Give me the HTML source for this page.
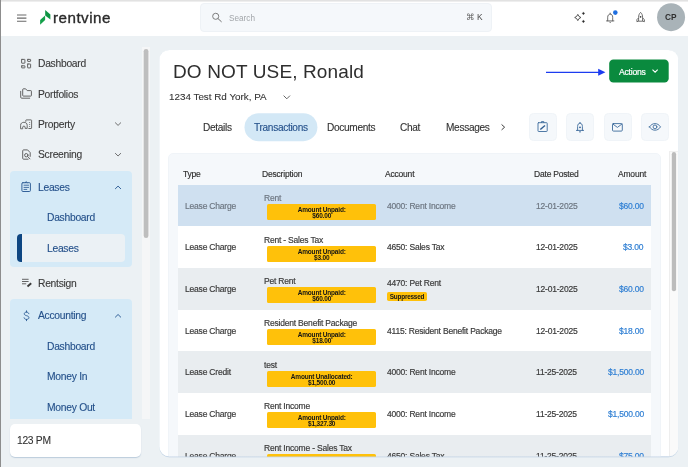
<!DOCTYPE html>
<html lang="en">
<head>
<meta charset="utf-8">
<title>Rentvine - Lease Transactions</title>
<style>
*{box-sizing:border-box;margin:0;padding:0}
html,body{width:688px;height:467px;overflow:hidden}
body{position:relative;background:#ecf1f4;font-family:"Liberation Sans",Arial,sans-serif;color:#3a3a3a;-webkit-font-smoothing:antialiased}
.abs{position:absolute}
.t{position:absolute;white-space:nowrap;line-height:1;transform:translateY(-50%);will-change:transform}
svg{position:absolute;overflow:visible}

/* window edges */
#edgeL{left:0;top:0;width:1px;height:467px;background:#8d8d8d;z-index:50}
#edgeT{left:0;top:0;width:688px;height:2px;background:linear-gradient(#dcdcdc,#f4f4f4);z-index:49}

/* header */
header{position:absolute;left:0;top:0;width:688px;height:36px;background:#fff}
#search{left:200px;top:3px;width:292px;height:29px;background:#f5f8fb;border:1px solid #eef2f6;border-radius:4px}
#logo-text{left:53.4px;top:18.1px;font-size:15.2px;color:#2a2a2a;letter-spacing:0.48px;-webkit-text-stroke:0.35px #2a2a2a}

/* sidebar */
nav{position:absolute;left:0;top:36px;width:150px;height:431px}
.grp{position:absolute;left:10.3px;width:121.7px;background:#d5eaf7;border-radius:4px}
.nav-t{font-size:10.3px;letter-spacing:-0.27px;left:38.2px;color:#3a3a3a;-webkit-text-stroke:0.12px}
.nav-s{font-size:10.3px;letter-spacing:-0.27px;left:46.8px;color:#24508a;-webkit-text-stroke:0.12px}
.blue{color:#24508a}
#sb-track{left:142px;top:11px;width:7.6px;height:372.4px;background:#f5f6f7}
#sb-thumb{left:143.7px;top:13px;width:4.8px;height:189px;background:#bebebe;border-radius:2.4px}
#pm{left:10px;top:388.3px;width:131px;height:32.7px;background:#fff;border-radius:5px;box-shadow:0 1px 1px rgba(150,175,200,.55)}

/* main card */
main{position:absolute;left:160px;top:50px;width:518.3px;height:406.5px;border-radius:10px;overflow:hidden}
h1{position:absolute;white-space:nowrap;font-weight:400;font-size:19px;letter-spacing:0.13px;line-height:1;left:12.8px;top:21.3px;transform:translateY(-50%);will-change:transform;color:#2e2e2e}
#addr{left:9px;top:46.9px;font-size:9.85px;color:#333;-webkit-text-stroke:0.1px}
.tab{font-size:10.1px;letter-spacing:-0.31px;top:77.8px;color:#333;-webkit-text-stroke:0.12px}
.ib{position:absolute;top:63px;width:28px;height:28px;border-radius:4.5px;background:#f5f8fb;border:1px solid #f0f4f8}
#tcard{left:8.4px;top:103px;width:492.3px;height:330px;background:#f5f8fb;border:1px solid #f0f4f8;border-radius:5px}
#vtrack{left:509.3px;top:100.6px;width:9px;height:306px;background:#fafafa;border-left:1px solid #eeeeee;border-top:1px solid #f1f1f1}
#vthumb{left:511.8px;top:102.2px;width:4.2px;height:139px;background:#bcbcbc;border-radius:2.1px}
.th{font-size:8.5px;letter-spacing:-0.2px;top:124.3px;color:#2e2e2e;-webkit-text-stroke:0.15px}
.row{position:absolute;left:17.9px;width:472.7px;height:41.7px;font-size:8.5px;letter-spacing:-0.2px;color:#3a3a3a}
.row.g{background:#e9edf0}
.row.w{background:#fff}
.row.h{background:#cfe0f0;color:#6d7681}
.row .t{top:21px;-webkit-text-stroke:0.18px}
.row .c1{left:7.4px}
.row .c2{left:85.8px;top:13.3px}
.row .c3{left:209px}
.row .c3.up{top:15.1px}
.row .c4{left:358.6px}
.row .c5{right:7px;color:#2f7fd3}
.badge{position:absolute;left:88.8px;top:19.3px;width:109.4px;height:15.7px;border-radius:1.6px;background:#ffc10a;color:#151515;font-weight:700;font-size:6.5px;letter-spacing:-0.19px;line-height:6px;text-align:center;padding-top:2.85px;will-change:transform}
.sup{position:absolute;left:209.2px;top:23.6px;width:40px;height:9.2px;border-radius:1.8px;background:#ffc10a;color:#151515;font-weight:700;font-size:6.4px;letter-spacing:-0.2px;line-height:9.2px;text-align:center;will-change:transform}
</style>
</head>
<body>
<div id="edgeT" class="abs"></div>
<div id="edgeL" class="abs"></div>

<header>
  <svg style="left:16.8px;top:13.5px" width="10" height="8" viewBox="0 0 10 8"><path d="M0 0.9h9.4M0 4.1h9.4M0 7.2h9.4" stroke="#6a6a6a" stroke-width="1.05" fill="none"/></svg>
  <svg style="left:40px;top:10px" width="11" height="15" viewBox="0 0 11 15"><path d="M0.1 10.1L5.1 5.6V10.1L0.1 14.7Z" fill="#14a04a"/><path d="M5.2 0.1L10.4 4.5V9.4L5.2 5.4Z" fill="#0e9443"/></svg>
  <span id="logo-text" class="t">rentvine</span>
  <div id="search" class="abs"></div>
  <svg style="left:212px;top:12px" width="11" height="11" viewBox="0 0 11 11"><circle cx="3.7" cy="4.3" r="3.05" fill="none" stroke="#707070" stroke-width="0.9"/><path d="M5.9 6.5L9.6 9.9" stroke="#707070" stroke-width="1" fill="none"/></svg>
  <span class="t" style="left:229px;top:18.7px;font-size:8.2px;color:#a2a6aa">Search</span>
  <span class="t" style="left:465.8px;top:17.4px;font-size:8.3px;color:#5a5a5a;font-family:'DejaVu Sans','Liberation Sans',sans-serif">⌘</span>
  <span class="t" style="left:477px;top:17.2px;font-size:8.4px;color:#4a4a4a">K</span>
  <!-- sparkle -->
  <svg style="left:574px;top:11px" width="12" height="13" viewBox="0 0 12 13"><path d="M3.8 3.4Q4.5 5.8 6.9 6.5Q4.5 7.2 3.8 9.6Q3.1 7.2 0.7 6.5Q3.1 5.8 3.8 3.4Z" fill="none" stroke="#2d2d2d" stroke-width="0.8" stroke-linejoin="round"/><path d="M9.4 0.9L9.85 1.95L10.9 2.4L9.85 2.85L9.4 3.9L8.95 2.85L7.9 2.4L8.95 1.95Z M9.4 8.9L9.85 9.95L10.9 10.4L9.85 10.85L9.4 11.9L8.95 10.85L7.9 10.4L8.95 9.95Z" fill="#222" stroke="#222" stroke-width="0.3"/></svg>
  <!-- bell -->
  <svg style="left:606px;top:12px" width="12" height="12" viewBox="0 0 12 12"><path d="M0.5 8.9H7.9M1.7 8.9V5.2C1.7 3.3 2.8 2.1 4.2 2.1C5.6 2.1 6.7 3.3 6.7 5.2V8.9M4.2 2.1V1.1M3.5 10.1C3.8 10.7 4.6 10.7 4.9 10.1" fill="none" stroke="#555" stroke-width="0.85" stroke-linecap="round"/><circle cx="9.3" cy="0.6" r="2.3" fill="#1f6fe0"/></svg>
  <!-- rocket -->
  <svg style="left:636px;top:12px" width="10" height="11" viewBox="0 0 10 11"><path d="M4.6 0.4C6 1.6 6.6 3.4 6.6 5.6V9.2H2.6V5.6C2.6 3.4 3.2 1.6 4.6 0.4ZM2.6 5.9L0.9 7.6V9.7L2.6 9.2M6.6 5.9L8.4 7.6V9.7L6.6 9.2" fill="none" stroke="#4a4a4a" stroke-width="0.8" stroke-linejoin="round"/><circle cx="4.6" cy="4.8" r="0.85" fill="#3a3a3a"/></svg>
  <svg style="left:656px;top:2px" width="31" height="31" viewBox="0 0 31 31"><circle cx="15.05" cy="15.2" r="14" fill="#a9b3b8"/></svg>
  <span class="t" style="left:664.9px;top:17.1px;font-size:8.3px;font-weight:700;color:#2f2f2f;letter-spacing:0.1px">CP</span>
</header>

<nav>
  <div id="sb-track" class="abs"></div>
  

  <span class="t nav-t" style="top:28.3px">Dashboard</span>
  <span class="t nav-t" style="top:58.5px">Portfolios</span>
  <span class="t nav-t" style="top:88.8px">Property</span>
  <span class="t nav-t" style="top:119.2px">Screening</span>

  <div class="grp" style="top:135px;height:95.5px"></div>
  <span class="t nav-t blue" style="top:152.3px">Leases</span>
  <span class="t nav-s" style="top:182.3px">Dashboard</span>
  <div class="abs" style="left:16.7px;top:198px;width:108.5px;height:28px;background:#ebf1f5;border-radius:4px;border-left:5px solid #0d4682"></div>
  <span class="t nav-s" style="top:212.6px">Leases</span>

  <span class="t nav-t" style="top:248.1px">Rentsign</span>

  <div class="grp" style="top:263px;height:120.4px;border-bottom-left-radius:0;border-bottom-right-radius:0"></div>
  <span class="t nav-t blue" style="top:280.3px">Accounting</span>
  <span class="t nav-s" style="top:311.0px">Dashboard</span>
  <span class="t nav-s" style="top:341.3px">Money In</span>
  <span class="t nav-s" style="top:371.6px">Money Out</span>

  <div id="pm" class="abs"></div>
  <span class="t" style="left:17.3px;top:405px;font-size:10.3px;letter-spacing:-0.3px;color:#333;-webkit-text-stroke:0.1px">123 PM</span>
</nav>

<svg style="left:158px;top:48px" width="524" height="412" viewBox="0 0 524 412"><rect x="1.3" y="2.3" width="519.1" height="406.8" rx="10" fill="#c9d9e8"/><rect x="1.3" y="1.9" width="519.1" height="406.7" rx="10" fill="#fff"/></svg>
<main>
  <h1>DO NOT USE, Ronald</h1>
  <span id="addr" class="t">1234 Test Rd York, PA</span>
  <svg style="left:122.8px;top:44.6px" width="8" height="5" viewBox="0 0 8 5"><path d="M0.6 0.6L3.8 3.8L7 0.6" fill="none" stroke="#555" stroke-width="0.9"/></svg>

  <!-- arrow -->
  <svg style="left:386px;top:18px" width="60" height="9" viewBox="0 0 60 9"><path d="M0 4.3H53" stroke="#1c3cf0" stroke-width="1.25"/><path d="M52.2 0.8L59.4 4.3L52.2 7.8Z" fill="#1c3cf0"/></svg>
  <svg style="left:449px;top:9px" width="61" height="25" viewBox="0 0 61 25"><rect x="0.2" y="0.6" width="59.5" height="23" rx="4.2" fill="#0a8a3e"/></svg>
  <span class="t" style="left:459px;top:21.7px;font-size:8.6px;letter-spacing:-0.22px;color:#fff;font-weight:400;-webkit-text-stroke:0.2px #fff">Actions</span>
  <svg style="left:491.8px;top:19.4px" width="7" height="5" viewBox="0 0 7 5"><path d="M0.5 0.6L3.1 3.2L5.7 0.6" fill="none" stroke="#fff" stroke-width="1.1"/></svg>

  <svg style="left:84px;top:63px" width="74" height="29" viewBox="0 0 74 29"><rect x="0.5" y="0.2" width="72.9" height="28" rx="14" fill="#d3e8f6"/></svg>
  <span class="t tab" style="left:43.4px">Details</span>
  <span class="t tab" style="left:94.4px;color:#24508a">Transactions</span>
  <span class="t tab" style="left:167.3px">Documents</span>
  <span class="t tab" style="left:240px">Chat</span>
  <span class="t tab" style="left:286.2px">Messages</span>
  <svg style="left:340.6px;top:74.2px" width="5" height="7" viewBox="0 0 5 7"><path d="M0.6 0.5L3.6 3.2L0.6 5.9" fill="none" stroke="#333" stroke-width="0.95"/></svg>

  <div class="ib" style="left:368.5px"></div>
  <div class="ib" style="left:406.1px"></div>
  <div class="ib" style="left:443.5px"></div>
  <div class="ib" style="left:481px"></div>

  <div id="tcard" class="abs"></div>
  <span class="t th" style="left:23.3px">Type</span>
  <span class="t th" style="left:101.5px">Description</span>
  <span class="t th" style="left:225px">Account</span>
  <span class="t th" style="left:373.9px">Date Posted</span>
  <span class="t th" style="left:458.2px">Amount</span>

  <div class="row h" style="top:134.6px"><span class="t c1">Lease Charge</span><span class="t c2">Rent</span><div class="badge">Amount Unpaid:<br>$60.00</div><span class="t c3">4000: Rent Income</span><span class="t c4">12-01-2025</span><span class="t c5">$60.00</span></div>
  <div class="row w" style="top:176.3px"><span class="t c1">Lease Charge</span><span class="t c2">Rent - Sales Tax</span><div class="badge">Amount Unpaid:<br>$3.00</div><span class="t c3">4650: Sales Tax</span><span class="t c4">12-01-2025</span><span class="t c5">$3.00</span></div>
  <div class="row g" style="top:218px"><span class="t c1">Lease Charge</span><span class="t c2">Pet Rent</span><div class="badge">Amount Unpaid:<br>$60.00</div><span class="t c3 up">4470: Pet Rent</span><div class="sup">Suppressed</div><span class="t c4">12-01-2025</span><span class="t c5">$60.00</span></div>
  <div class="row w" style="top:259.7px"><span class="t c1">Lease Charge</span><span class="t c2">Resident Benefit Package</span><div class="badge">Amount Unpaid:<br>$18.00</div><span class="t c3">4115: Resident Benefit Package</span><span class="t c4">12-01-2025</span><span class="t c5">$18.00</span></div>
  <div class="row g" style="top:301.4px"><span class="t c1">Lease Credit</span><span class="t c2">test</span><div class="badge">Amount Unallocated:<br>$1,500.00</div><span class="t c3">4000: Rent Income</span><span class="t c4">11-25-2025</span><span class="t c5">$1,500.00</span></div>
  <div class="row w" style="top:343.1px"><span class="t c1">Lease Charge</span><span class="t c2">Rent Income</span><div class="badge">Amount Unpaid:<br>$1,327.30</div><span class="t c3">4000: Rent Income</span><span class="t c4">11-25-2025</span><span class="t c5">$1,500.00</span></div>
  <div class="row g" style="top:384.8px"><span class="t c1">Lease Charge</span><span class="t c2">Rent Income - Sales Tax</span><div class="badge">Amount Unpaid:<br>$75.00</div><span class="t c3">4650: Sales Tax</span><span class="t c4">11-25-2025</span><span class="t c5">$75.00</span></div>

  <div id="vtrack" class="abs"></div>
  
</main>

<svg id="icons" style="left:0;top:0;z-index:20;pointer-events:none" width="688" height="467" viewBox="0 0 688 467" fill="none" stroke-linecap="round" stroke-linejoin="round">
  <defs><linearGradient id="cbg" gradientUnits="userSpaceOnUse" x1="0" y1="449" x2="0" y2="457"><stop offset="0" stop-color="#c3d4e6" stop-opacity="0"/><stop offset="0.7" stop-color="#c3d4e6" stop-opacity="0.5"/><stop offset="1" stop-color="#c3d4e6" stop-opacity="1"/></linearGradient><clipPath id="cbc"><rect x="150" y="449" width="540" height="12"/></clipPath></defs>
  <rect x="159.3" y="50" width="519.1" height="406.9" rx="10" fill="none" stroke="url(#cbg)" stroke-width="0.9" clip-path="url(#cbc)"/>
  <rect x="143.7" y="49" width="4.7" height="189" rx="2.35" fill="#bebebe"/>
  <rect x="671.8" y="152.1" width="4.3" height="139.2" rx="2.15" fill="#bcbcbc"/>
  <!-- sidebar: dashboard -->
  <g stroke="#5c5c5c" stroke-width="0.95">
    <rect x="21.6" y="59.4" width="3.3" height="3.8" rx="0.3"/>
    <rect x="27.6" y="59.4" width="3" height="2" rx="0.3"/>
    <rect x="21.6" y="65.8" width="3.3" height="2.1" rx="0.3"/>
    <rect x="27.6" y="64" width="3" height="3.9" rx="0.3"/>
  </g>
  <!-- portfolios -->
  <g stroke="#5c5c5c" stroke-width="0.95">
    <path d="M22.7 89.4Q22.7 88.8 23.3 88.8H25.6L27.2 90.6H30.8Q31.4 90.6 31.4 91.2V95.5Q31.4 96.1 30.8 96.1H23.3Q22.7 96.1 22.7 95.5Z"/>
    <path d="M20.7 91.3V97.2Q20.7 98.2 21.7 98.2H29.7"/>
  </g>
  <!-- property -->
  <g stroke="#5c5c5c" stroke-width="0.9">
    <path d="M20.6 128.4V125.3C20.6 123.3 22 122.3 23.9 122.3C25.8 122.3 27.2 123.3 27.2 125.3V128.4H25.1V127.1C25.1 125.8 22.7 125.8 22.7 127.1V128.4Z"/>
    <path d="M25.8 121.4V120.4Q25.8 119.9 26.3 119.9H31.1Q31.6 119.9 31.6 120.4V128Q31.6 128.5 31.1 128.5H28.8"/>
  </g>
  <g fill="#5c5c5c"><circle cx="29.7" cy="122.6" r="0.5"/><circle cx="29.7" cy="124.5" r="0.5"/><circle cx="29.7" cy="126.4" r="0.5"/></g>
  <!-- screening -->
  <g stroke="#5c5c5c" stroke-width="0.95">
    <path d="M30.2 156.4V152.6L27.6 149.9H23.6Q22.7 149.9 22.7 150.8V158.3Q22.7 159.2 23.6 159.2H28.1"/>
    <circle cx="26.3" cy="155.2" r="1.7"/>
    <path d="M27.6 156.5L30 158.9"/>
  </g>
  <!-- leases -->
  <g stroke="#2a5a94" stroke-width="0.95">
    <rect x="21.9" y="182.7" width="8.5" height="8.8" rx="1"/>
    <path d="M25.2 182.6L26.15 181.7L27.1 182.6" />
    <path d="M24 185.2H28.6M24 187.4H28.6M24 189.4H26.8" stroke-width="0.85"/>
  </g>
  <!-- rentsign -->
  <g stroke="#5c5c5c" stroke-width="0.95" stroke-linecap="butt">
    <path d="M22 279.3H28.6M22 281.5H28.6M22 283.8H26.2"/>
  </g>
  <path d="M27.5 286.4L31.2 283.3" stroke="#3a3a3a" stroke-width="1.9" stroke-linecap="butt"/>
  <!-- accounting -->
  <g stroke="#2a5a94" stroke-width="0.9">
    <path d="M26.5 310.8V312.1M26.5 319.4V320.7"/>
    <path d="M28.8 313.7C28.6 312.7 27.7 312.1 26.5 312.1C25.2 312.1 24.3 312.8 24.3 313.8C24.3 314.9 25.2 315.3 26.6 315.7C28.1 316.1 28.9 316.6 28.9 317.7C28.9 318.7 27.9 319.4 26.5 319.4C25.2 319.4 24.3 318.8 24.1 317.8"/>
  </g>
  <!-- sidebar chevrons -->
  <g stroke-width="0.95">
    <path d="M115.4 122.8L118.05 125.4L120.7 122.8" stroke="#666"/>
    <path d="M115.4 153.4L118.05 156L120.7 153.4" stroke="#666"/>
    <path d="M115.4 188.7L118.05 186.1L120.7 188.7" stroke="#2a5a94"/>
    <path d="M115.4 317.1L118.05 314.5L120.7 317.1" stroke="#2a5a94"/>
  </g>
  <!-- toolbar icons -->
  <g stroke="#3d6b9c" stroke-width="0.9">
    <rect x="538" y="122.7" width="9.2" height="8.8" rx="0.6"/>
    <path d="M541.4 122.6V121.6H543.8V122.6"/>
    <path d="M540.3 129.5L545 125.4" stroke-width="1.35" stroke="#2f5d91" stroke-linecap="butt"/>
    <!-- bell -->
    <path d="M576.4 130.4H583.6M577.6 130.4V126.6C577.6 124.4 578.6 123.2 580 123.2C581.4 123.2 582.4 124.4 582.4 126.6V130.4M580 123.2V122.4M579.3 131.9Q580 132.6 580.7 131.9"/>
    <!-- mail -->
    <rect x="612.5" y="123.6" width="9.8" height="7.5" rx="1"/>
    <path d="M612.8 124L617.4 127.4L622 124"/>
    <!-- eye -->
    <path d="M649.5 126.9C650.9 124.7 652.8 123.6 655 123.6C657.2 123.6 659.1 124.7 660.5 126.9C659.1 129.1 657.2 130.2 655 130.2C652.8 130.2 650.9 129.1 649.5 126.9Z"/>
    <circle cx="655" cy="126.9" r="1.9"/>
  </g>
  <circle cx="580" cy="127.3" r="0.9" fill="#2f5d91"/>
</svg>
</body>
</html>
